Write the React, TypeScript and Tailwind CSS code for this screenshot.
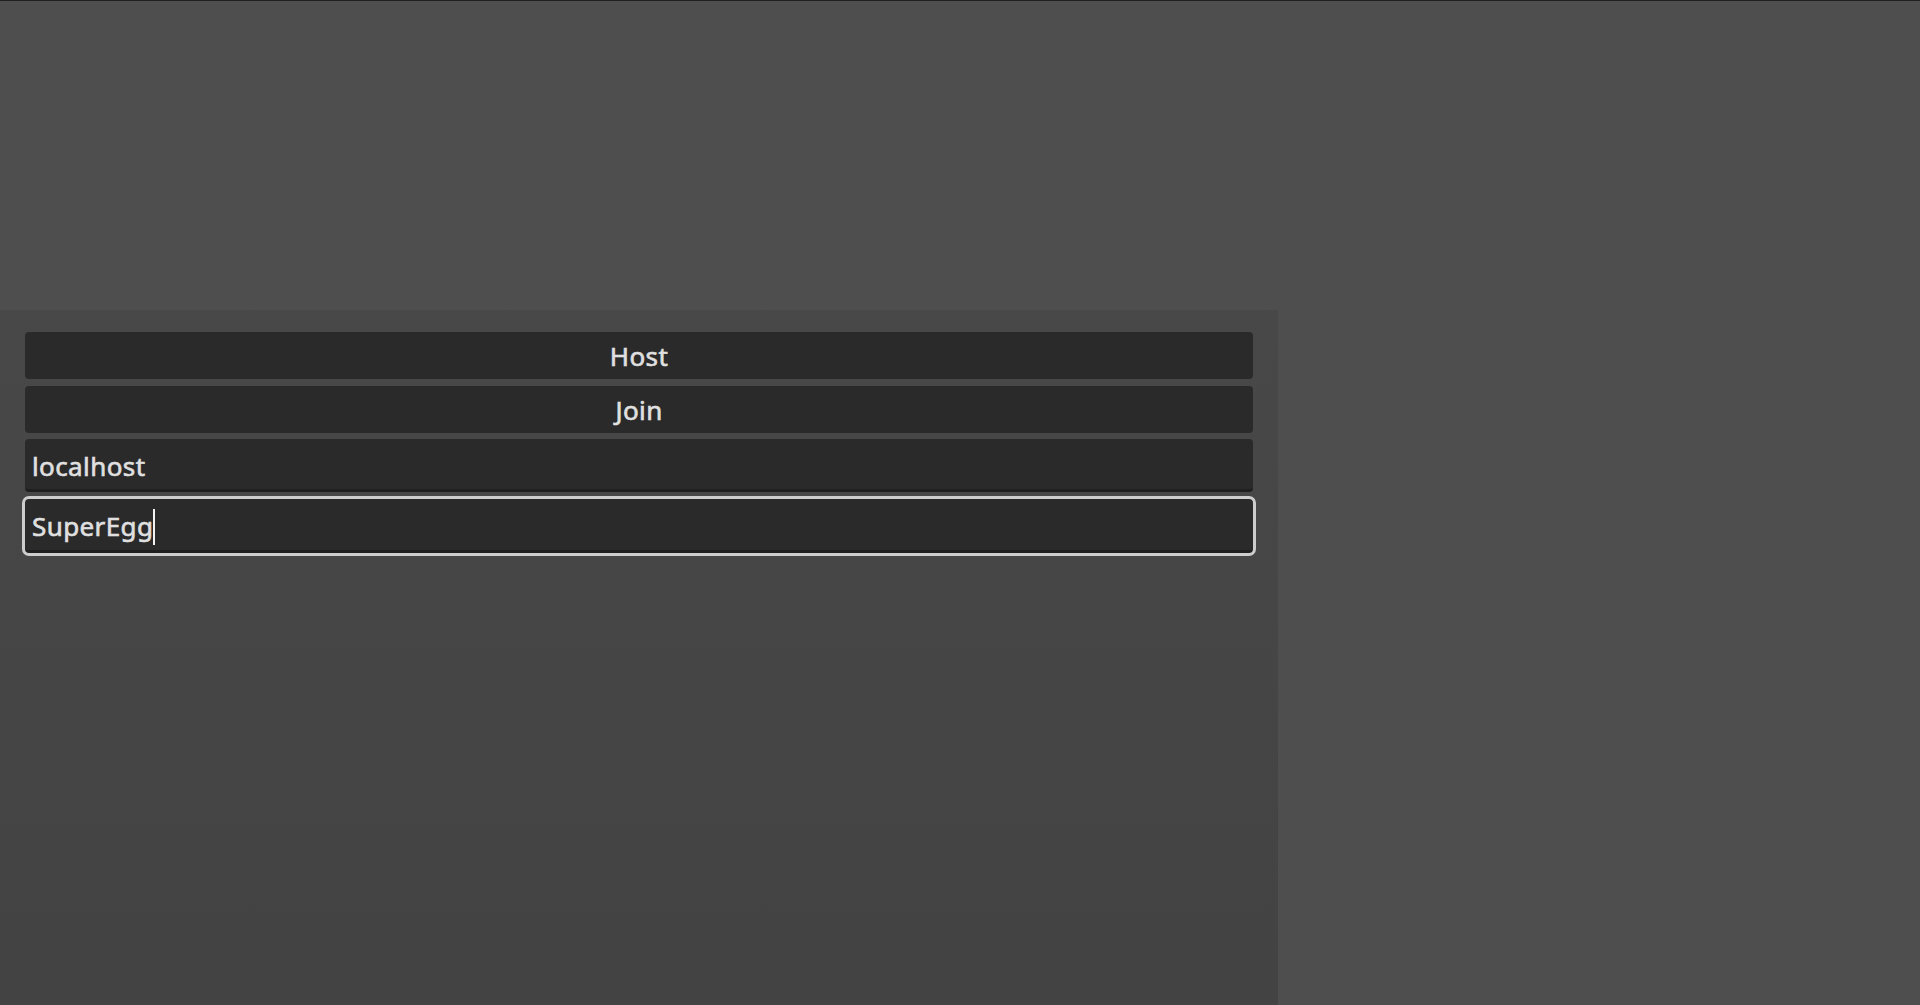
export default function App() {
  return (
    <div
      className="flex h-screen w-full flex-col overflow-hidden border-t border-[#202020] bg-[#4e4e4e]"
      style={{ fontFamily: '"Noto Sans", "Open Sans", sans-serif' }}
    >
      <div className="h-[309px] shrink-0" />
      <div className="flex w-[1278px] flex-1 flex-col bg-gradient-to-b from-[#484848] to-[#434343] px-[25px] pt-[22px]">
        <MenuButton label="Host" />
        <div className="h-[7px]" />
        <MenuButton label="Join" />
        <div className="h-[6px]" />
        <div className="flex h-[53px] items-center rounded-[4px] border-b-[3px] border-[#1f1f1f] bg-[#2a2a2a] px-[7px] pt-[5px] text-[26px] tracking-[0.4px] text-[#e0e0e0] [-webkit-text-stroke:0.6px_#e0e0e0]">
          localhost
        </div>
        <div className="h-[7px]" />
        <div className="flex h-[54px] items-center rounded-[4px] border-b-[3px] border-[#1f1f1f] bg-[#2a2a2a] px-[7px] pt-[4px] text-[26px] tracking-[0.4px] text-[#e0e0e0] outline-[3px] outline-[#cdcdcd] outline-solid [-webkit-text-stroke:0.6px_#e0e0e0]">
          <span>SuperEgg</span>
          <span className="h-[36px] w-[2px] bg-[#f2f2f2]" />
        </div>
      </div>
    </div>
  )
}

function MenuButton({ label }: { label: string }) {
  return (
    <div className="flex h-[47px] items-center justify-center rounded-[4px] bg-[#2a2a2a] pt-[2px] text-[26px] tracking-[0.4px] text-[#e0e0e0] [-webkit-text-stroke:0.6px_#e0e0e0]">
      {label}
    </div>
  )
}
